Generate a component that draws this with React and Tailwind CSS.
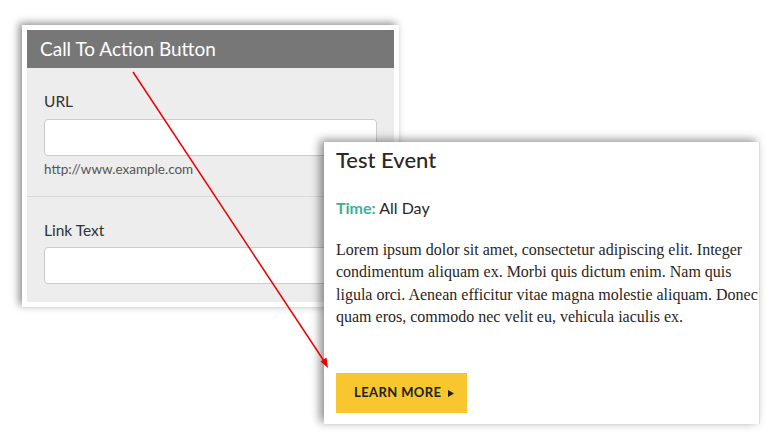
import React from 'react';

const lorem = [
  'Lorem ipsum dolor sit amet, consectetur adipiscing elit. Integer',
  'condimentum aliquam ex. Morbi quis dictum enim. Nam quis',
  'ligula orci. Aenean efficitur vitae magna molestie aliquam. Donec',
  'quam eros, commodo nec velit eu, vehicula iaculis ex.',
];

export default function App() {
  return (
    <div className="relative h-[443px] w-[782px] overflow-hidden bg-white font-['Lato',sans-serif]">
      {/* --- CMS FIELD PANEL --- */}
      <div className="absolute left-[22px] top-[25px] w-[377px] bg-white p-[5px] shadow-[-3px_-2px_8px_rgba(0,0,0,0.45)]">
        <div className="flex h-[38px] items-center bg-[#777777] px-[13px] text-[19px] text-white">
          Call To Action Button
        </div>
        <div className="bg-[#ededed]">
          <div className="border-b border-[#d9d9d9] px-[17px] pb-[18px] pt-[23px]">
            <div className="text-[15.5px] leading-[20px] text-[#333]">URL</div>
            <div className="mt-[8px] h-[37px] rounded-[4px] border border-[#cccccc] bg-white" />
            <div className="mt-[4px] text-[13.5px] leading-[18px] text-[#555]">http://www.example.com</div>
          </div>
          <div className="px-[17px] pb-[18px] pt-[23px]">
            <div className="text-[15.5px] leading-[20px] text-[#333]">Link Text</div>
            <div className="mt-[7px] h-[37px] rounded-[4px] border border-[#cccccc] bg-white" />
          </div>
        </div>
      </div>

      {/* --- EVENT PREVIEW --- */}
      <div className="absolute left-[324px] top-[142px] h-[282px] w-[436px] border-r border-[#dddddd] bg-white px-[12px] pt-[3px] shadow-[-4px_-2px_9px_rgba(0,0,0,0.45)]">
        <h2 className="text-[22px] font-medium leading-[30px] text-[#2d2624]">Test Event</h2>
        <p className="mt-[22px] text-[16px] leading-[22px] text-[#2d2624]">
          <span className="font-bold text-[#3bb295]">Time:</span> All Day
        </p>
        <div className="mt-[20px] font-['Liberation_Serif',serif] text-[16px] leading-[22.3px] text-[#2b2523]">
          {lorem.map((line) => (
            <div key={line} className="whitespace-nowrap">{line}</div>
          ))}
        </div>
        <div className="mt-[45px] flex h-[40px] w-[131px] items-center gap-[7px] bg-[#f8c62e] pl-[18px] text-[13px] font-bold tracking-[0.03em] text-[#222]">
          LEARN MORE
          <svg width="6" height="7" viewBox="0 0 6 7"><path d="M0 0 L6 3.5 L0 7 Z" fill="#222" /></svg>
        </div>
      </div>

      {/* --- ARROW --- */}
      <svg className="pointer-events-none absolute left-0 top-0" width="782" height="443">
        <line x1="133" y1="72" x2="326" y2="364" stroke="#ee0000" strokeWidth="1.5" />
        <path d="M328 368 L320.5 361.5 L326.5 357.5 Z" fill="#ee0000" />
      </svg>
    </div>
  );
}
